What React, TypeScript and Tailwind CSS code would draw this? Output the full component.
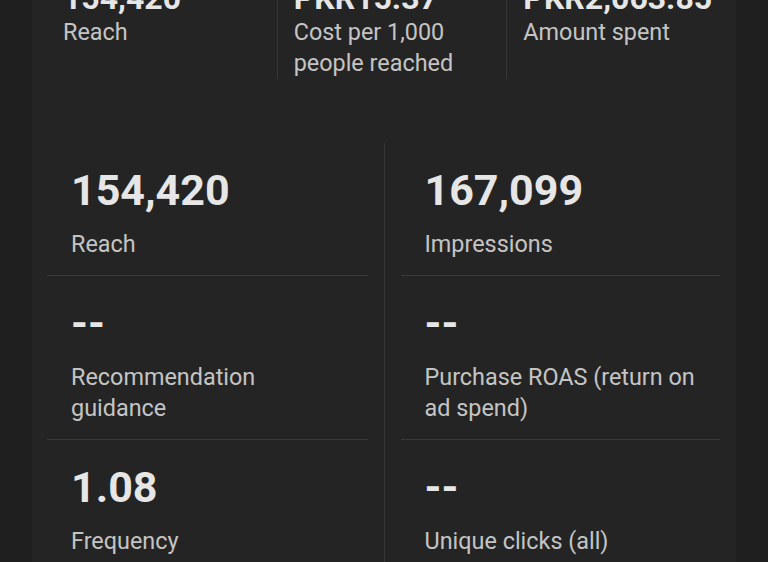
import React from 'react';

type Metric = { value: string; label: string };

const summary: Metric[] = [
  { value: '154,420', label: 'Reach' },
  { value: 'PKR15.37', label: 'Cost per 1,000 people reached' },
  { value: 'PKR2,063.85', label: 'Amount spent' },
];

const left: Metric[] = [
  { value: '154,420', label: 'Reach' },
  { value: '--', label: 'Recommendation guidance' },
  { value: '1.08', label: 'Frequency' },
];

const right: Metric[] = [
  { value: '167,099', label: 'Impressions' },
  { value: '--', label: 'Purchase ROAS (return on ad spend)' },
  { value: '--', label: 'Unique clicks (all)' },
];

const MetricCell = ({ m, last }: { m: Metric; last: boolean }) => (
  <div className={`pt-[21px] pb-[15px] ${last ? '' : 'border-b border-[#3a3a3a]'}`}>
    <div className="pl-6 pr-4">
      <div className="text-[43px] leading-[52px] font-bold text-[#e6e6e6]">{m.value}</div>
      <div className="mt-[13px] text-[23.4px] leading-[31px] text-[#c4c4c4]">{m.label}</div>
    </div>
  </div>
);

export default function App() {
  return (
    <div
      className="h-[562px] overflow-hidden bg-[#1f1f1f] px-8"
      style={{ fontFamily: 'Roboto, "Noto Sans", sans-serif' }}
    >
      <div className="bg-[#242424] min-h-[600px] -mt-[21px]">
        {/* summary row */}
        <div className="grid grid-cols-3 pl-[15px]">
          {summary.map((m, i) => (
            <div key={m.label} className={`px-4 ${i > 0 ? 'border-l border-[#363636]' : ''}`}>
              <div className="text-[32px] leading-[38px] font-bold text-[#e6e6e6] whitespace-nowrap">{m.value}</div>
              <div className="text-[23.4px] leading-[31px] text-[#c4c4c4] pr-6">{m.label}</div>
            </div>
          ))}
        </div>

        {/* detail grid */}
        <div className="grid grid-cols-2 mt-[64px] pl-[15px] pr-4">
          <div className="pr-4">
            {left.map((m, i) => (
              <MetricCell key={m.label} m={m} last={i === left.length - 1} />
            ))}
          </div>
          <div className="pl-4 border-l border-[#363636]">
            {right.map((m, i) => (
              <MetricCell key={m.label} m={m} last={i === right.length - 1} />
            ))}
          </div>
        </div>
      </div>
    </div>
  );
}
